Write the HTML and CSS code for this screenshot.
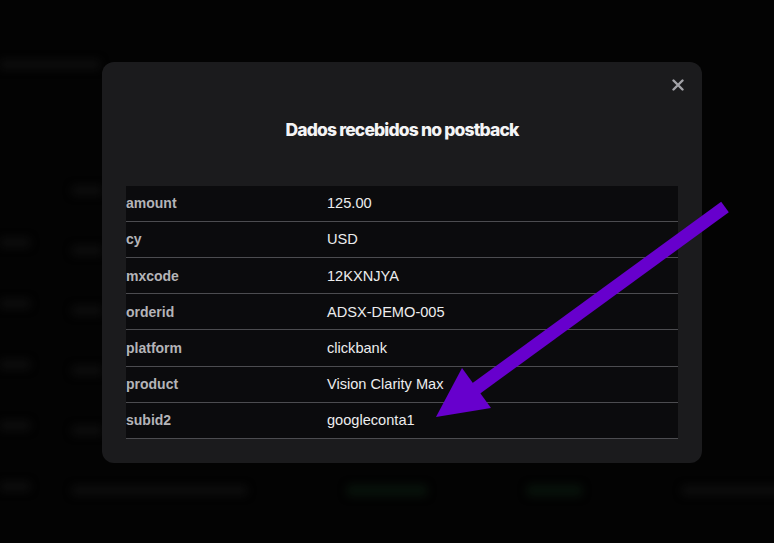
FILE: index.html
```html
<!DOCTYPE html>
<html lang="pt">
<head>
<meta charset="utf-8">
<title>Dados recebidos no postback</title>
<link rel="stylesheet" href="styles.css">
</head>
<body>
<div class="page">
  <div class="bg" aria-hidden="true">
    <div class="bg-side">
      <span class="blob w100"></span>
      <div class="bg-side-list">
        <span class="blob w30"></span>
        <span class="blob w30"></span>
        <span class="blob w30"></span>
        <span class="blob w30"></span>
        <span class="blob w30"></span>
      </div>
    </div>
    <div class="bg-main">
      <div class="bg-row"><span class="blob w30"></span><span class="spacer"></span><span class="blob w70"></span></div>
      <div class="bg-row"><span class="blob w30"></span><span class="spacer"></span><span class="blob w70"></span></div>
      <div class="bg-row"><span class="blob w30"></span><span class="spacer"></span><span class="blob w70"></span></div>
      <div class="bg-row"><span class="blob w30"></span><span class="spacer"></span><span class="blob w70"></span></div>
      <div class="bg-row"><span class="blob w30"></span><span class="spacer"></span><span class="blob w70"></span></div>
      <div class="bg-row last">
        <span class="blob w175"></span>
        <span class="blob green w80"></span>
        <span class="blob green w55"></span>
        <span class="blob w200"></span>
      </div>
    </div>
  </div>

  <div class="overlay">
    <div class="modal">
      <div class="modal-head">
        <button class="close" type="button" aria-label="Fechar">
          <svg width="12" height="12" viewBox="0 0 12 12"><path d="M1.5 1.5 L10.5 10.5 M10.5 1.5 L1.5 10.5" stroke="#a3a3a8" stroke-width="2.4" stroke-linecap="round"/></svg>
        </button>
        <h2 class="title">Dados recebidos no postback</h2>
      </div>
      <div class="table">
        <div class="row"><span class="key">amount</span><span class="val">125.00</span></div>
        <div class="row"><span class="key">cy</span><span class="val">USD</span></div>
        <div class="row"><span class="key">mxcode</span><span class="val">12KXNJYA</span></div>
        <div class="row"><span class="key">orderid</span><span class="val">ADSX-DEMO-005</span></div>
        <div class="row"><span class="key">platform</span><span class="val">clickbank</span></div>
        <div class="row"><span class="key">product</span><span class="val">Vision Clarity Max</span></div>
        <div class="row"><span class="key">subid2</span><span class="val">googleconta1</span></div>
      </div>
    </div>
  </div>

  <svg class="arrow" width="774" height="543" viewBox="0 0 774 543" aria-hidden="true">
    <line x1="725" y1="207" x2="474" y2="390" stroke="#6700cd" stroke-width="13"/>
    <polygon points="436,417 462,368 491,408" fill="#6700cd"/>
  </svg>
</div>
</body>
</html>
```

FILE: styles.css
```css
* { box-sizing: border-box; }
html, body {
  margin: 0;
  padding: 0;
  background: #030303;
  width: 774px;
  height: 543px;
  overflow: hidden;
  font-family: "Liberation Sans", Arial, sans-serif;
}
.page {
  position: relative;
  width: 774px;
  height: 543px;
  overflow: hidden;
}

/* blurred background app */
.bg {
  position: absolute;
  inset: 0;
  display: flex;
  filter: blur(4px);
}
.bg-side {
  width: 72px;
  display: flex;
  flex-direction: column;
  padding-top: 60px;
}
.bg-side-list {
  display: flex;
  flex-direction: column;
  gap: 52px;
  margin-top: 169px;
}
.bg-main {
  flex: 1;
  display: flex;
  flex-direction: column;
  gap: 52px;
  padding-top: 186px;
}
.bg-row {
  display: flex;
  align-items: center;
  height: 8px;
}
.bg-row .spacer { flex: 1; }
.bg-row.last { gap: 100px; }
.blob {
  display: block;
  height: 9px;
  border-radius: 4px;
  background: #0e0e0e;
  flex-shrink: 0;
}
.blob.green { background: #08130b; height: 11px; }
.w30 { width: 30px; }
.w55 { width: 55px; }
.w70 { width: 70px; }
.w80 { width: 80px; }
.w100 { width: 100px; }
.w175 { width: 175px; }
.w200 { width: 200px; }

/* modal */
.overlay {
  position: absolute;
  inset: 0;
  padding: 62px 0 0 102px;
}
.modal {
  width: 600px;
  height: 401px;
  background: #1b1b1d;
  border-radius: 12px;
  padding: 0 24px 24px;
  display: flex;
  flex-direction: column;
}
.modal-head {
  height: 124px;
  display: flex;
  flex-direction: column;
  padding-top: 17px;
}
.close {
  align-self: flex-end;
  margin-right: -6px;
  width: 12px;
  height: 12px;
  padding: 0;
  border: 0;
  background: transparent;
  display: flex;
  cursor: pointer;
}
.title {
  margin: 28px 0 0;
  text-align: center;
  font-family: Inter, "Liberation Sans", sans-serif;
  font-weight: 800;
  font-size: 17.5px;
  line-height: 22px;
  letter-spacing: -0.85px;
  color: #f4f4f5;
}
.table {
  background: #0b0b0d;
  display: flex;
  flex-direction: column;
}
.row {
  display: flex;
  align-items: center;
  height: 36.2px;
  border-bottom: 1px solid #4c4c50;
  font-size: 14px;
}
.key {
  width: 201px;
  font-weight: 700;
  color: #b4b4b8;
}
.val {
  font-size: 14.6px;
  color: #ededee;
}

.arrow {
  position: absolute;
  left: 0;
  top: 0;
}
```
